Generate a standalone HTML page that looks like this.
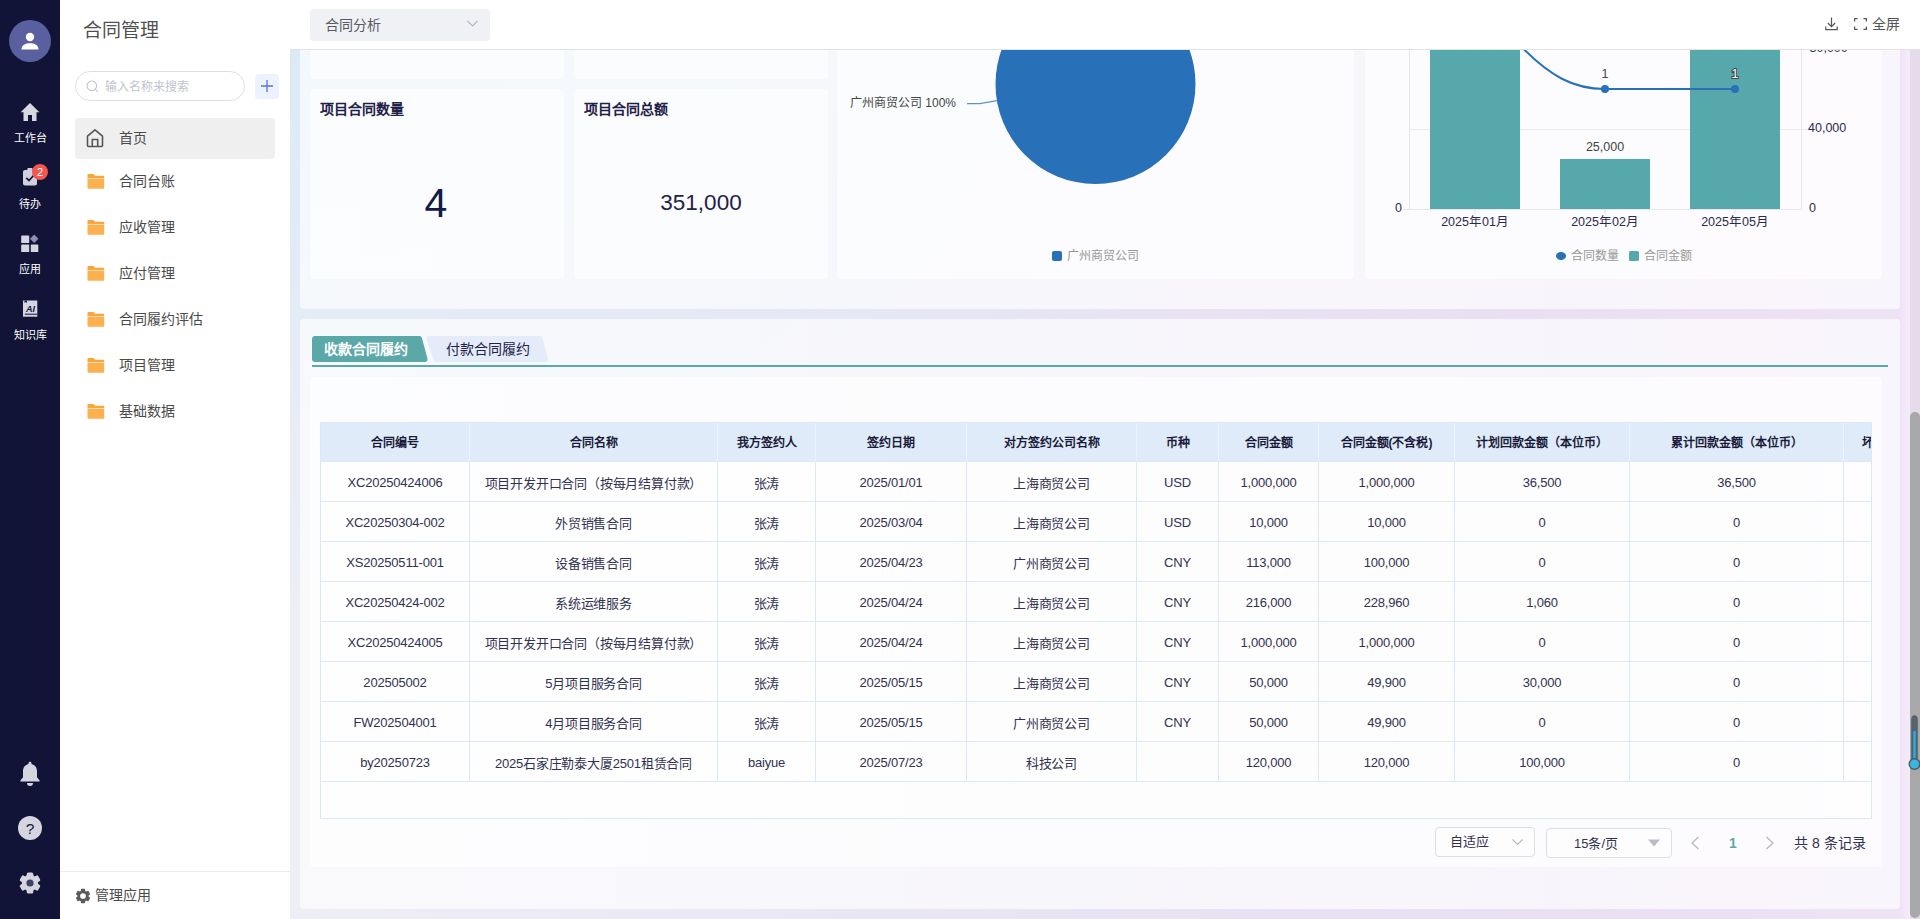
<!DOCTYPE html>
<html lang="zh-CN">
<head>
<meta charset="utf-8">
<title>合同管理</title>
<style>
*{box-sizing:border-box;margin:0;padding:0}
html,body{width:1920px;height:919px;overflow:hidden;background:#fff}
body{font-family:"Liberation Sans",sans-serif;color:#1f2148;font-size:14px;position:relative}
.abs{position:absolute}
/* rail */
#rail{position:absolute;left:0;top:0;width:60px;height:919px;background:#111437}
#rail .avatar{position:absolute;left:9px;top:20px;width:42px;height:42px;border-radius:50%;background:#5a609f}
#rail .it{position:absolute;left:0;width:60px;text-align:center;color:#fff;font-size:11px;line-height:14px}
#rail svg{position:absolute;display:block}
/* nav */
#nav{position:absolute;left:60px;top:0;width:230px;height:919px;background:#fff}
#nav h1{position:absolute;left:23px;top:17px;font-size:19px;line-height:28px;font-weight:400;color:#505050}
#nav .search{position:absolute;left:15px;top:71px;width:170px;height:30px;border:1px solid #dcdfe6;border-radius:15px;background:#fff}
#nav .search span{position:absolute;left:29px;top:1px;line-height:28px;font-size:12px;color:#c0c4cc}
#nav .plus{position:absolute;left:195px;top:74px;width:24px;height:25px;border-radius:4px;background:#ecf2fe}
#nav .mi{position:absolute;left:15px;width:200px;height:46px;font-size:14px;color:#4a4a4a}
#nav .mi span{position:absolute;left:44px;top:0;line-height:46px}
#nav .mi svg{position:absolute;left:11px;top:14px}
#nav .mi.act{height:41px;background:#efefef;border-radius:4px}
#nav .mi.act span{line-height:40px}
#nav .foot{position:absolute;left:0;top:871px;width:230px;height:48px;border-top:1px solid #ececec}
#nav .foot span{position:absolute;left:35px;top:0;line-height:47px;font-size:14px;color:#4a4a4a}
/* header */
#hdr{position:absolute;left:290px;top:0;width:1630px;height:50px;background:#fff;border-bottom:1px solid #e3e3e6}
#hdr .sel{position:absolute;left:20px;top:9px;width:180px;height:32px;border-radius:4px;background:#f0f1f5}
#hdr .sel span{position:absolute;left:15px;top:0;line-height:32px;font-size:14px;color:#555a66}
#hdr .full{position:absolute;left:1582px;top:0;line-height:48px;font-size:14px;color:#555}
/* main */
#main{position:absolute;left:290px;top:50px;width:1620px;height:869px;overflow:hidden;
 background:radial-gradient(ellipse 62% 68% at 0% 0%,#dceaf5 0%,rgba(220,234,245,0) 100%),linear-gradient(90deg,#eeeef6 0%,#e8e4f4 45%,#eadff3 78%,#eee2f5 99.300%,#f4ecfa 100%)}
.panel{position:absolute;background:rgba(255,255,255,.66);border-radius:4px}
.card{position:absolute;background:rgba(255,255,255,.6);border-radius:4px}
.ktitle{position:absolute;left:10px;top:10px;font-size:14px;font-weight:700;line-height:20px;color:#1f2148}
.kval{position:absolute;left:0;width:100%;text-align:center;color:#1f2148}
/* scrollbar */
#sb{position:absolute;left:1910px;top:50px;width:10px;height:869px;background:#e5dbea}
#sb .th{position:absolute;left:0;top:362px;width:10px;height:506px;border-radius:5px;background:#a8a8a8}
/* tabs */
.tabline{position:absolute;left:12px;top:46px;width:1576px;height:2px;background:#5ba8a8}
/* table */
#tbl{position:absolute;left:10px;top:45px;width:1552px;height:397px;border:1px solid #dce8f5;overflow:hidden;background:rgba(255,255,255,.55)}
#tbl table{border-collapse:separate;border-spacing:0;table-layout:fixed;width:1640px}
#tbl th{height:39px;padding-bottom:1px;background:#dfebf8;font-size:12px;font-weight:700;color:#1a1b3a;border-right:1px solid #eef4fb;border-bottom:1px solid #dce8f5;text-align:center;white-space:nowrap;overflow:hidden}
#tbl td{height:40px;padding-top:1px;font-size:13px;letter-spacing:-.2px;color:#30324f;border-right:1px solid #dce8f5;border-bottom:1px solid #dce8f5;text-align:center;white-space:nowrap;overflow:hidden}
.pg{position:absolute;font-size:14px;color:#30324f}
.pgsel{position:absolute;height:30px;border:1px solid #dcdfe6;border-radius:4px;background:rgba(255,255,255,.6);font-size:13px;line-height:28px;color:#30324f}
</style>
</head>
<body>
<div id="rail">
  <div class="avatar"></div>
  <svg style="left:20px;top:31px" width="20" height="20" viewBox="0 0 20 20"><circle cx="10" cy="6" r="4.200" fill="#fff"/><path d="M1.500 18.500c0-4.500 4-6.300 8.500-6.300s8.500 1.800 8.500 6.300z" fill="#fff"/></svg>
  <svg style="left:20px;top:102px" width="20" height="20" viewBox="0 0 20 20"><path d="M10 1 19.400 10.200H16.500V19H12V13H8V19H3.500V10.200H.600z" fill="#d6d7e2"/></svg>
  <div class="it" style="top:131px">工作台</div>
  <svg style="left:22px;top:167px" width="16" height="19" viewBox="0 0 16 19"><path d="M3 3h2.300V2.200c0-.7.500-1.200 1.200-1.200h3c.7 0 1.200.5 1.200 1.200V3H13c1.100 0 2 .9 2 2v11.500c0 1.100-.9 2-2 2H3c-1.100 0-2-.9-2-2V5c0-1.100.900-2 2-2z" fill="#d0d1dd"/><path d="M4.300 10.800l2.700 2.700 4.800-5.300" stroke="#111437" stroke-width="1.700" fill="none"/></svg>
  <div class="abs" style="left:32px;top:164px;width:16px;height:16px;border-radius:50%;background:#f4574f;color:#fff;font-size:11px;line-height:16px;text-align:center">2</div>
  <div class="it" style="top:197px">待办</div>
  <svg style="left:21px;top:234px" width="18" height="19" viewBox="0 0 18 19"><rect x=".200" y="1.500" width="8" height="7.500" rx=".600" fill="#d5d6e2"/><rect x=".200" y="10.500" width="8" height="7.500" rx=".600" fill="#d5d6e2"/><rect x="9.800" y="10.500" width="7.500" height="7.500" rx=".600" fill="#d5d6e2"/><path d="M13.200.500l4.200 4.200-4.200 4.200L9 4.700z" fill="#8d90b1"/></svg>
  <div class="it" style="top:262px">应用</div>
  <svg style="left:22px;top:300px" width="16" height="17" viewBox="0 0 16 17"><path d="M1 .500h14.300v16.200H1z" fill="#d5d6e2"/><path d="M2.500.500v2.600l1.200-1 1.200 1V.500z" fill="#111437"/><path d="M2.800 14.200h12.500" stroke="#111437" stroke-width="1"/><text x="8.500" y="11.800" font-size="9" font-weight="700" font-style="italic" fill="#111437" text-anchor="middle" font-family="Liberation Sans, sans-serif">AI</text></svg>
  <div class="it" style="top:328px">知识库</div>
  <svg style="left:19px;top:761px" width="22" height="26" viewBox="0 0 22 26"><path d="M11 .800c.900 0 1.500.6 1.500 1.500v.6c3.400.8 5.500 3.600 5.500 7.300v6l2.600 3.200v1H1.400v-1L4 16.200v-6c0-3.700 2.100-6.500 5.500-7.300v-.6c0-.9.600-1.500 1.500-1.500z" fill="#d4d5df"/><path d="M8 22h6a3 3 0 0 1-6 0z" fill="#d4d5df"/></svg>
  <svg style="left:18px;top:816px" width="24" height="24" viewBox="0 0 24 24"><circle cx="12" cy="12" r="12" fill="#d4d5df"/><text x="12" y="17.500" font-size="15.500" fill="#111437" text-anchor="middle" font-family="Liberation Sans, sans-serif">?</text></svg>
  <svg style="left:18px;top:871px" width="24" height="24" viewBox="-12 -12 24 24"><g fill="#d4d5df"><circle r="8.200"/><rect x="-3.300" y="-10.600" width="6.600" height="8" rx="1.600" transform="rotate(0)"/><rect x="-3.300" y="-10.600" width="6.600" height="8" rx="1.600" transform="rotate(60)"/><rect x="-3.300" y="-10.600" width="6.600" height="8" rx="1.600" transform="rotate(120)"/><rect x="-3.300" y="-10.600" width="6.600" height="8" rx="1.600" transform="rotate(180)"/><rect x="-3.300" y="-10.600" width="6.600" height="8" rx="1.600" transform="rotate(240)"/><rect x="-3.300" y="-10.600" width="6.600" height="8" rx="1.600" transform="rotate(300)"/></g><circle r="3.600" fill="#3e416a"/></svg>
</div>
<div id="nav">
  <h1>合同管理</h1>
  <div class="search">
    <svg class="abs" style="left:10px;top:8px" width="13" height="13" viewBox="0 0 13 13"><circle cx="5.800" cy="5.800" r="4.800" fill="none" stroke="#c0c4cc" stroke-width="1.100"/><path d="M9.300 9.300l2.500 2.500" stroke="#c0c4cc" stroke-width="1.100"/></svg>
    <span>输入名称来搜索</span>
  </div>
  <div class="plus"><svg class="abs" style="left:6px;top:6px" width="12" height="12" viewBox="0 0 12 12"><path d="M6 0v12M0 6h12" stroke="#5b6cf0" stroke-width="1.300"/></svg></div>
  <div class="mi act" style="top:118px"><svg style="left:11px;top:10px" width="18" height="20" viewBox="0 0 18 20"><path d="M1.500 8.200 9 1.800l7.500 6.400v9.300c0 .6-.4 1-1 1h-13c-.6 0-1-.4-1-1z" fill="none" stroke="#555" stroke-width="1.600" stroke-linejoin="round"/><path d="M6.300 18.300v-6.800h5.400v6.800" fill="none" stroke="#555" stroke-width="1.600"/></svg><span>首页</span></div>
  <div class="mi" style="top:158px"><svg width="20" height="18" viewBox="0 0 20 18"><path d="M1.500 3c0-.6.400-1 1-1h5l1.700 1.800H17.200c.6 0 1 .4 1 1v1.400H1.500z" fill="#f9a63c"/><path d="M1.500 6.800h16.700v8.900c0 .6-.4 1-1 1H2.500c-.6 0-1-.4-1-1z" fill="#fdb04e"/></svg><span>合同台账</span></div>
  <div class="mi" style="top:204px"><svg width="20" height="18" viewBox="0 0 20 18"><path d="M1.500 3c0-.6.400-1 1-1h5l1.700 1.800H17.200c.6 0 1 .4 1 1v1.400H1.500z" fill="#f9a63c"/><path d="M1.500 6.800h16.700v8.900c0 .6-.4 1-1 1H2.500c-.6 0-1-.4-1-1z" fill="#fdb04e"/></svg><span>应收管理</span></div>
  <div class="mi" style="top:250px"><svg width="20" height="18" viewBox="0 0 20 18"><path d="M1.500 3c0-.6.400-1 1-1h5l1.700 1.800H17.200c.6 0 1 .4 1 1v1.400H1.500z" fill="#f9a63c"/><path d="M1.500 6.800h16.700v8.900c0 .6-.4 1-1 1H2.500c-.6 0-1-.4-1-1z" fill="#fdb04e"/></svg><span>应付管理</span></div>
  <div class="mi" style="top:296px"><svg width="20" height="18" viewBox="0 0 20 18"><path d="M1.500 3c0-.6.400-1 1-1h5l1.700 1.800H17.200c.6 0 1 .4 1 1v1.400H1.500z" fill="#f9a63c"/><path d="M1.500 6.800h16.700v8.900c0 .6-.4 1-1 1H2.500c-.6 0-1-.4-1-1z" fill="#fdb04e"/></svg><span>合同履约评估</span></div>
  <div class="mi" style="top:342px"><svg width="20" height="18" viewBox="0 0 20 18"><path d="M1.500 3c0-.6.400-1 1-1h5l1.700 1.800H17.200c.6 0 1 .4 1 1v1.400H1.500z" fill="#f9a63c"/><path d="M1.500 6.800h16.700v8.900c0 .6-.4 1-1 1H2.500c-.6 0-1-.4-1-1z" fill="#fdb04e"/></svg><span>项目管理</span></div>
  <div class="mi" style="top:388px"><svg width="20" height="18" viewBox="0 0 20 18"><path d="M1.500 3c0-.6.400-1 1-1h5l1.700 1.800H17.200c.6 0 1 .4 1 1v1.400H1.500z" fill="#f9a63c"/><path d="M1.500 6.800h16.700v8.900c0 .6-.4 1-1 1H2.500c-.6 0-1-.4-1-1z" fill="#fdb04e"/></svg><span>基础数据</span></div>
  <div class="foot"><svg class="abs" style="left:15px;top:16px" width="16" height="16" viewBox="-12 -12 24 24"><g fill="#5a5a5a"><circle r="8.400"/><rect x="-3.200" y="-10.800" width="6.400" height="8" rx="1.400" transform="rotate(0)"/><rect x="-3.200" y="-10.800" width="6.400" height="8" rx="1.400" transform="rotate(60)"/><rect x="-3.200" y="-10.800" width="6.400" height="8" rx="1.400" transform="rotate(120)"/><rect x="-3.200" y="-10.800" width="6.400" height="8" rx="1.400" transform="rotate(180)"/><rect x="-3.200" y="-10.800" width="6.400" height="8" rx="1.400" transform="rotate(240)"/><rect x="-3.200" y="-10.800" width="6.400" height="8" rx="1.400" transform="rotate(300)"/></g><circle r="4.300" fill="#fff"/></svg><span>管理应用</span></div>
</div>
<div id="hdr">
  <div class="sel"><span>合同分析</span><svg class="abs" style="left:157px;top:11px" width="11" height="8" viewBox="0 0 11 8"><path d="M.500 1l5 5 5-5" fill="none" stroke="#b4b8c2" stroke-width="1.100"/></svg></div>
  <svg class="abs" style="left:1535px;top:17px" width="13" height="14" viewBox="0 0 13 14"><path d="M6.500 .500v9M2.800 6l3.700 3.700L10.200 6M.800 9.500v3.200h11.400V9.500" fill="none" stroke="#555" stroke-width="1.200"/></svg>
  <svg class="abs" style="left:1564px;top:18px" width="13" height="12" viewBox="0 0 13 12"><path d="M.600 3.500V.600h3M9.400.600h3v2.900M12.400 8.500v2.900h-3M3.600 11.400h-3V8.500" fill="none" stroke="#555" stroke-width="1.200"/></svg>
  <div class="full">全屏</div>
</div>
<div id="main">
  <!-- panel 1: x 300-1900, y (cut)-309 -->
  <div class="panel" style="left:10px;top:-40px;width:1600px;height:299px">
    <div class="card" style="left:10px;top:20px;width:254px;height:49px"></div>
    <div class="card" style="left:274px;top:20px;width:254px;height:49px"></div>
    <div class="card" style="left:10px;top:79px;width:254px;height:190px"><div class="ktitle">项目合同数量</div><div class="kval" style="top:88px;left:-1px;font-size:41px;line-height:52px;color:#131946">4</div></div>
    <div class="card" style="left:274px;top:79px;width:254px;height:190px"><div class="ktitle">项目合同总额</div><div class="kval" style="top:98px;font-size:22.500px;line-height:32px">351,000</div></div>
    <!-- pie card x 837-1354 -->
    <div class="card" style="left:537px;top:-20px;width:517px;height:289px">
      <svg class="abs" style="left:0;top:0" width="517" height="289" viewBox="0 0 517 289">
        <circle cx="258.500" cy="94" r="100" fill="#2870b7"/>
        <path d="M130 113.700h13l17-3" fill="none" stroke="#5b93c8" stroke-width="1.200"/>
        <rect x="215" y="261" width="10" height="10" rx="2" fill="#2870b7"/>
      </svg>
      <div class="abs" style="left:13px;top:105px;font-size:12px;line-height:16px;color:#444;white-space:nowrap">广州商贸公司 100%</div>
      <div class="abs" style="left:230px;top:258px;font-size:12px;line-height:16px;color:#999;white-space:nowrap">广州商贸公司</div>
    </div>
    <!-- bar card x 1365-1882 -->
    <div class="card" style="left:1065px;top:-20px;width:517px;height:289px">
      <svg class="abs" style="left:0;top:0" width="517" height="289" viewBox="0 0 517 289">
        <path d="M44.500 0V219.500H436.500V0" fill="none" stroke="#e6e6ec" stroke-width="1"/>
        <path d="M44 139.500H444" fill="none" stroke="#e9e9ef" stroke-width="1"/>
        <path d="M38 219.500h6M110 219.500v4M240 219.500v4M370 219.500v4" fill="none" stroke="#e0e0e6" stroke-width="1"/>
        <rect x="65" y="0" width="90" height="219" fill="#56a8aa"/>
        <rect x="195" y="169" width="90" height="50" fill="#56a8aa"/>
        <rect x="325" y="0" width="90" height="219" fill="#56a8aa"/>
        <path d="M150 50C185 88 210 99 240 99L370 99" fill="none" stroke="#2870b7" stroke-width="2"/>
        <circle cx="240" cy="99" r="4" fill="#2870b7"/><circle cx="370" cy="99" r="4" fill="#2870b7"/>
        <ellipse cx="196" cy="266" rx="5" ry="4" fill="#2870b7"/>
        <rect x="264" y="261" width="10" height="10" rx="1.500" fill="#56a8aa"/>
        <g font-family="Liberation Sans, sans-serif" font-size="12.500" fill="#2a2c4e">
          <text x="240" y="88" text-anchor="middle" fill="#444">1</text>
          <text x="370" y="88" text-anchor="middle" fill="#fff" stroke="#444" stroke-width="2" paint-order="stroke">1</text>
          <text x="240" y="161" text-anchor="middle" fill="#444">25,000</text>
          <text x="37" y="222" text-anchor="end">0</text>
          <text x="444" y="222">0</text>
          <text x="443" y="141.800">40,000</text>
          <text x="444.500" y="62">80,000</text>
          <text x="110" y="236" text-anchor="middle">2025年01月</text>
          <text x="240" y="236" text-anchor="middle">2025年02月</text>
          <text x="370" y="236" text-anchor="middle">2025年05月</text>
          <text x="206" y="270" fill="#999" font-size="12">合同数量</text>
          <text x="279" y="270" fill="#999" font-size="12">合同金额</text>
        </g>
      </svg>
    </div>
  </div>
  <div class="panel" style="left:10px;top:269px;width:1600px;height:590px">
    <svg class="abs" style="left:12px;top:17px" width="240" height="26" viewBox="0 0 240 26">
      <path d="M3 0H107c1.500 0 2.700.9 3 2.300L115.500 22.700c.4 1.800-.7 3.300-2.500 3.300H3c-1.700 0-3-1.300-3-3V3c0-1.700 1.300-3 3-3z" fill="#5ba8a8"/>
      <path d="M117 0H227.500c1.500 0 2.700.9 3 2.300L236 22.700c.4 1.800-.7 3.300-2.500 3.300H124.500c-1.500 0-2.700-.9-3-2.300L114.500 3C114 1.300 115.200 0 117 0z" fill="#e3ecf8"/>
    </svg>
    <div class="abs" style="left:12px;top:17px;width:108px;line-height:26px;text-align:center;font-size:14px;font-weight:700;color:#fff;white-space:nowrap">收款合同履约</div>
    <div class="abs" style="left:133px;top:17px;width:109px;line-height:26px;text-align:center;font-size:14px;color:#1f2148;white-space:nowrap">付款合同履约</div>
    <div class="tabline"></div>
    <!-- inner card: abs x 310-1882, y 377-866 -->
    <div class="card" style="left:10px;top:58px;width:1572px;height:490px">
      <div id="tbl"><table><colgroup><col style="width:149px"><col style="width:248px"><col style="width:98px"><col style="width:151px"><col style="width:170px"><col style="width:82px"><col style="width:100px"><col style="width:136px"><col style="width:175px"><col style="width:214px"><col style="width:117px"></colgroup>
<thead><tr><th>合同编号</th><th>合同名称</th><th>我方签约人</th><th>签约日期</th><th>对方签约公司名称</th><th>币种</th><th>合同金额</th><th>合同金额(不含税)</th><th>计划回款金额（本位币）</th><th>累计回款金额（本位币）</th><th style="text-align:left;padding-left:18px">坏账金额</th></tr></thead>
<tbody>
<tr><td>XC20250424006</td><td>项目开发开口合同（按每月结算付款）</td><td>张涛</td><td>2025/01/01</td><td>上海商贸公司</td><td>USD</td><td>1,000,000</td><td>1,000,000</td><td>36,500</td><td>36,500</td><td></td></tr>
<tr><td>XC20250304-002</td><td>外贸销售合同</td><td>张涛</td><td>2025/03/04</td><td>上海商贸公司</td><td>USD</td><td>10,000</td><td>10,000</td><td>0</td><td>0</td><td></td></tr>
<tr><td>XS20250511-001</td><td>设备销售合同</td><td>张涛</td><td>2025/04/23</td><td>广州商贸公司</td><td>CNY</td><td>113,000</td><td>100,000</td><td>0</td><td>0</td><td></td></tr>
<tr><td>XC20250424-002</td><td>系统运维服务</td><td>张涛</td><td>2025/04/24</td><td>上海商贸公司</td><td>CNY</td><td>216,000</td><td>228,960</td><td>1,060</td><td>0</td><td></td></tr>
<tr><td>XC20250424005</td><td>项目开发开口合同（按每月结算付款）</td><td>张涛</td><td>2025/04/24</td><td>上海商贸公司</td><td>CNY</td><td>1,000,000</td><td>1,000,000</td><td>0</td><td>0</td><td></td></tr>
<tr><td>202505002</td><td>5月项目服务合同</td><td>张涛</td><td>2025/05/15</td><td>上海商贸公司</td><td>CNY</td><td>50,000</td><td>49,900</td><td>30,000</td><td>0</td><td></td></tr>
<tr><td>FW202504001</td><td>4月项目服务合同</td><td>张涛</td><td>2025/05/15</td><td>广州商贸公司</td><td>CNY</td><td>50,000</td><td>49,900</td><td>0</td><td>0</td><td></td></tr>
<tr><td>by20250723</td><td>2025石家庄勒泰大厦2501租赁合同</td><td>baiyue</td><td>2025/07/23</td><td>科技公司</td><td></td><td>120,000</td><td>120,000</td><td>100,000</td><td>0</td><td></td></tr>
</tbody></table></div>
      <div class="pgsel" style="left:1125px;top:450px;width:100px"><span style="position:absolute;left:14px">自适应</span><svg class="abs" style="left:76px;top:11px" width="11" height="7" viewBox="0 0 11 7"><path d="M.500.500l5 5 5-5" fill="none" stroke="#b4b8c2" stroke-width="1.100"/></svg></div>
      <div class="pgsel" style="left:1236px;top:451px;width:126px"><span style="position:absolute;left:27px;top:1px">15条/页</span><svg class="abs" style="left:101px;top:10px" width="12" height="8" viewBox="0 0 12 8"><path d="M0 .500h12L6 7.500z" fill="#b9bcc4"/></svg></div>
      <svg class="abs" style="left:1380px;top:459px" width="10" height="14" viewBox="0 0 10 14"><path d="M8.500 1 2 7l6.500 6" fill="none" stroke="#b6b9c2" stroke-width="1.300"/></svg>
      <div class="pg" style="left:1413px;top:457px;width:20px;text-align:center;line-height:18px;font-weight:700;color:#5ba8a8">1</div>
      <svg class="abs" style="left:1455px;top:459px" width="10" height="14" viewBox="0 0 10 14"><path d="M1.500 1 8 7l-6.500 6" fill="none" stroke="#b6b9c2" stroke-width="1.300"/></svg>
      <div class="pg" style="left:1484px;top:457px;line-height:18px;white-space:nowrap">共 8 条记录</div>
    </div>
  </div>
</div>
<div id="sb"><div class="th"></div>
  <svg class="abs" style="left:-2.500px;top:663px" width="14" height="60" viewBox="0 0 14 60"><rect x="3.800" y="2.800" width="5.400" height="46" rx="2.700" fill="#55646f" stroke="#4d5d69" stroke-width="1"/><rect x="5.200" y="18" width="2.600" height="30" fill="#2ea6e2"/><circle cx="6.500" cy="51" r="6" fill="#4d5d69"/><circle cx="6.500" cy="51" r="4.500" fill="#3bb5e2"/></svg>
</div>
</body>
</html>
